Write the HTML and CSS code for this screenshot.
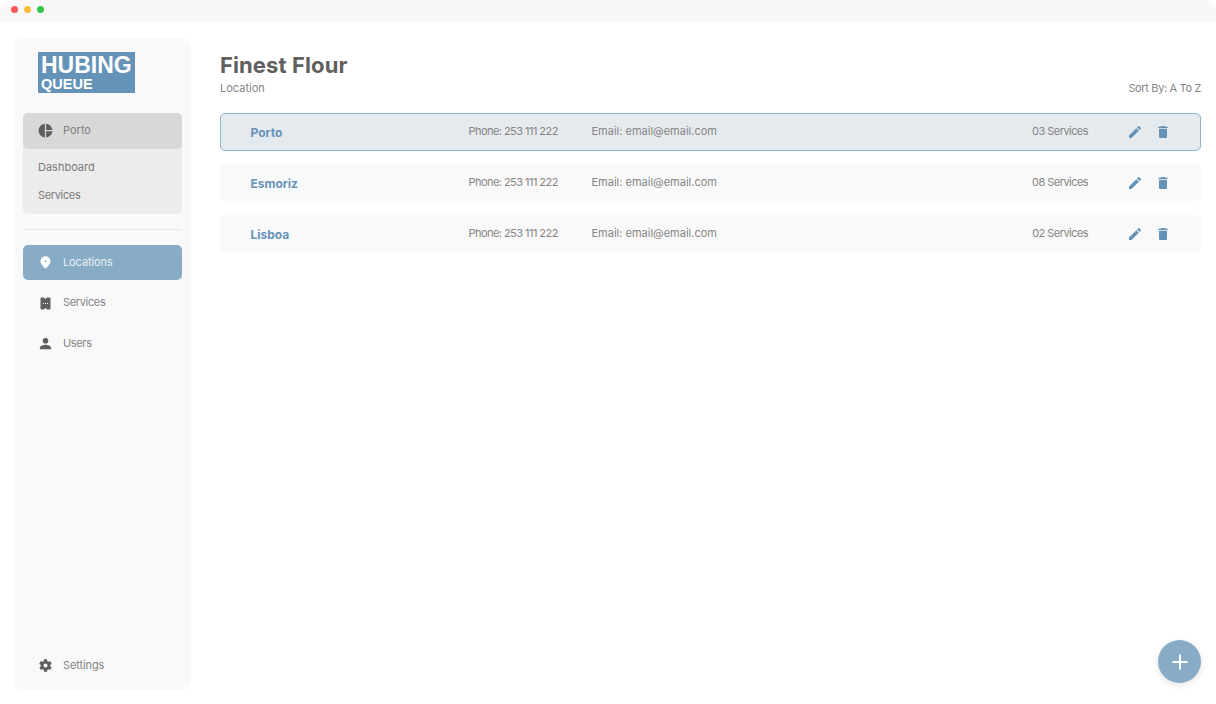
FILE: index.html
```html
<!DOCTYPE html>
<html lang="en">
  <head>
    <meta charset="UTF-8" />
    <meta name="viewport" content="width=device-width, initial-scale=1.0" />
    <title>Hubing Queue - Locations</title>
    <link rel="stylesheet" href="styles.css">
  </head>
  <body>
    <div class="titlebar">
      <span class="dot red"></span>
      <span class="dot yellow"></span>
      <span class="dot green"></span>
    </div>

    <div class="app">
      <aside class="sidebar">
        <div class="logo">
          <div class="logo-top">HUBING</div>
          <div class="logo-bottom">QUEUE</div>
        </div>

        <div class="group">
          <div class="group-head">
            <svg class="icon" viewBox="0 0 24 24"><path d="M11 1v22C5.200 22.500 1 17.700 1 12S5.200 1.500 11 1zm2 0v10h10c-.5-5.300-4.700-9.500-10-10zm0 12v10c5.300-.5 9.500-4.700 10-10H13z"/></svg>
            <span>Porto</span>
          </div>
          <a class="group-link">Dashboard</a>
          <a class="group-link short">Services</a>
        </div>

        <div class="divider"></div>

        <nav class="nav">
          <a class="nav-item active">
            <svg class="icon" viewBox="0 0 24 24"><path fill-rule="evenodd" d="M12 2a8 8 0 0 0-8 8c0 5.400 8 12 8 12s8-6.600 8-12a8 8 0 0 0-8-8zm0 6.500a1.500 1.500 0 1 1 0 3 1.500 1.500 0 0 1 0-3z"/></svg>
            <span>Locations</span>
          </a>
          <a class="nav-item">
            <svg class="icon" viewBox="0 0 24 24"><path fill-rule="evenodd" d="M5.500 2.500H10a2 2 0 0 0 4 0h4.500a1.500 1.500 0 0 1 1.500 1.500v16a1.500 1.500 0 0 1-1.500 1.500H14a2 2 0 0 0-4 0H5.500A1.500 1.500 0 0 1 4 20V4a1.500 1.500 0 0 1 1.500-1.500zM8 11.200v1.600h1.600v-1.600H8zm3.200 0v1.600h1.600v-1.600h-1.600zm3.200 0v1.600H16v-1.600h-1.600z"/></svg>
            <span class="short">Services</span>
          </a>
          <a class="nav-item">
            <svg class="icon" viewBox="0 0 24 24"><path d="M12 12a4.500 4.500 0 1 0 0-9 4.500 4.500 0 0 0 0 9zm0 2c-3.300 0-9 1.700-9 4.500V21h18v-2.500c0-2.800-5.700-4.500-9-4.500z"/></svg>
            <span class="short">Users</span>
          </a>
        </nav>

        <a class="nav-item settings">
          <svg class="icon" viewBox="0 0 24 24"><path fill-rule="evenodd" d="M19.400 13c.1-.3.1-.7.1-1s0-.7-.1-1l2.100-1.600c.2-.2.2-.4.100-.6l-2-3.500c-.1-.2-.4-.3-.6-.2l-2.500 1c-.5-.4-1.100-.7-1.700-1l-.4-2.600c0-.3-.2-.5-.5-.5h-4c-.3 0-.5.2-.5.400l-.4 2.700c-.6.2-1.200.6-1.700 1l-2.500-1c-.2-.1-.5 0-.6.200l-2 3.500c-.1.200-.1.400.1.600L4.600 11c-.1.300-.1.700-.1 1s0 .7.100 1l-2.100 1.600c-.2.200-.2.400-.1.600l2 3.500c.1.200.4.300.6.200l2.500-1c.5.400 1.100.7 1.700 1l.4 2.600c0 .3.200.5.500.5h4c.3 0 .5-.2.500-.4l.4-2.700c.6-.2 1.200-.6 1.700-1l2.500 1c.2.100.5 0 .6-.2l2-3.500c.1-.2.100-.4-.1-.6L19.400 13zM12 15.200a3.200 3.200 0 1 1 0-6.400 3.200 3.200 0 0 1 0 6.400z"/></svg>
          <span>Settings</span>
        </a>
      </aside>

      <main class="content">
        <h1 class="title">Finest Flour</h1>
        <div class="subhead">
          <span>Location</span>
          <span class="sort">Sort By: A To Z</span>
        </div>

        <div class="row selected">
          <span class="row-name">Porto</span>
          <span class="row-phone">Phone: 253 111 222</span>
          <span>Email: email@email.com</span>
          <span class="row-count">03 Services</span>
          <svg class="row-icon" viewBox="0 0 24 24"><path d="M3 17.250V21h3.750L17.800 9.940l-3.750-3.750L3 17.250zM20.700 7.040a1 1 0 0 0 0-1.410l-2.340-2.340a1 1 0 0 0-1.410 0l-1.830 1.830 3.750 3.750 1.830-1.830z"/></svg>
          <svg class="row-icon" viewBox="0 0 24 24"><path d="M6 19c0 1.100.9 2 2 2h8c1.100 0 2-.9 2-2V7H6v12zM19 4h-3.500l-1-1h-5l-1 1H5v2h14V4z"/></svg>
        </div>
        <div class="row">
          <span class="row-name">Esmoriz</span>
          <span class="row-phone">Phone: 253 111 222</span>
          <span>Email: email@email.com</span>
          <span class="row-count">08 Services</span>
          <svg class="row-icon" viewBox="0 0 24 24"><path d="M3 17.250V21h3.750L17.800 9.940l-3.750-3.750L3 17.250zM20.700 7.040a1 1 0 0 0 0-1.410l-2.340-2.340a1 1 0 0 0-1.410 0l-1.830 1.830 3.750 3.750 1.830-1.830z"/></svg>
          <svg class="row-icon" viewBox="0 0 24 24"><path d="M6 19c0 1.100.9 2 2 2h8c1.100 0 2-.9 2-2V7H6v12zM19 4h-3.500l-1-1h-5l-1 1H5v2h14V4z"/></svg>
        </div>
        <div class="row">
          <span class="row-name">Lisboa</span>
          <span class="row-phone">Phone: 253 111 222</span>
          <span>Email: email@email.com</span>
          <span class="row-count">02 Services</span>
          <svg class="row-icon" viewBox="0 0 24 24"><path d="M3 17.250V21h3.750L17.800 9.940l-3.750-3.750L3 17.250zM20.700 7.040a1 1 0 0 0 0-1.410l-2.340-2.340a1 1 0 0 0-1.410 0l-1.830 1.830 3.750 3.750 1.830-1.830z"/></svg>
          <svg class="row-icon" viewBox="0 0 24 24"><path d="M6 19c0 1.100.9 2 2 2h8c1.100 0 2-.9 2-2V7H6v12zM19 4h-3.500l-1-1h-5l-1 1H5v2h14V4z"/></svg>
        </div>
      </main>
    </div>

    <button class="fab">
      <svg viewBox="0 0 24 24"><path d="M10.800 3h2.400v7.800H21v2.400h-7.800V21h-2.400v-7.800H3v-2.400h7.800z"/></svg>
    </button>
  </body>
</html>
```

FILE: styles.css
```css
* {
  box-sizing: border-box;
}
html,
body {
  margin: 0;
  height: 100%;
}
body {
  position: relative;
  overflow: hidden;
  background: #fff;
  color: #808080;
  font-family: Inter, "Noto Sans", sans-serif;
  font-size: 11px;
}

/* ----------- window bar ----------- */
.titlebar {
  display: flex;
  align-items: center;
  gap: 6px;
  height: 22px;
  padding: 0 0 3px 11px;
  background: #f8f8f8;
  border-radius: 10px 10px 0 0;
}
.dot {
  width: 7px;
  height: 7px;
  border-radius: 50%;
}
.red {
  background: #fc5753;
}
.yellow {
  background: #fdbc40;
}
.green {
  background: #33c748;
}

.app {
  display: flex;
  height: 682px;
  padding: 16px 15px 14px 14px;
  gap: 29.500px;
}

/* ----------- sidebar ----------- */
.sidebar {
  display: flex;
  flex-direction: column;
  flex: 0 0 176.500px;
  padding: 14px 8.500px 7px 9px;
  background: #f9f9f9;
  border-radius: 10px;
}
.logo {
  width: 97px;
  height: 41px;
  margin: 0 0 20px 15px;
  padding: 0 0 0 3px;
  background: #6593b8;
  color: #fff;
  font-family: "Liberation Sans", sans-serif;
  font-weight: 700;
}
.logo-top {
  height: 26px;
  font-size: 23px;
  line-height: 26px;
}
.logo-bottom {
  height: 15px;
  font-size: 14.500px;
  line-height: 13px;
}
.icon {
  flex: none;
  width: 15px;
  height: 15px;
  fill: #5f5f5f;
}
.group {
  display: flex;
  flex-direction: column;
  height: 101px;
  background: #ececec;
  border-radius: 5px;
}
.group-head {
  display: flex;
  align-items: center;
  gap: 10px;
  height: 36px;
  padding: 0 0 1px 15px;
  margin-bottom: 4px;
  background: #d8d8d8;
  border-radius: 5px;
}
.group-head span {
  margin-bottom: 1px;
}
.group-link {
  height: 28px;
  padding-left: 15px;
  line-height: 28px;
  color: #7b7b7b;
}
.short {
  letter-spacing: -0.35px;
}
.divider {
  height: 1px;
  margin: 15px 0 15px;
  background: #e6e6e6;
}
.nav {
  display: flex;
  flex-direction: column;
  gap: 5.500px;
}
.nav-item {
  display: flex;
  align-items: center;
  gap: 10px;
  height: 35px;
  padding-left: 15px;
  border-radius: 5px;
  letter-spacing: -0.1px;
  color: #858585;
}
.nav-item span {
  margin-bottom: 2px;
}
.nav-item.active {
  background: #89acc6;
  color: #e8eff5;
}
.nav-item.active .icon {
  fill: #fff;
}
.settings {
  margin-top: auto;
}

/* ----------- main list ----------- */
.content {
  flex: 1;
}
.title {
  margin: 13px 0 0;
  font-size: 22px;
  line-height: 28px;
  font-weight: 700;
  letter-spacing: 0.1px;
  color: #5f5f5f;
}
.subhead {
  display: flex;
  justify-content: space-between;
  margin: 2px 0 17px;
  line-height: 15px;
  color: #858585;
}
.sort {
  letter-spacing: -0.35px;
}
.row {
  display: grid;
  grid-template-columns: 218px 123px 1fr auto 55px 28px;
  align-items: center;
  height: 37px;
  margin-bottom: 14px;
  padding: 0 30px 2px 30.500px;
  background: #f9f9f9;
  border-radius: 5px;
  color: #858585;
}
.row.selected {
  height: 38px;
  margin-bottom: 13px;
  padding: 0 29px 2px 29.500px;
  background: #e5eaef;
  border: 1px solid #8fb2cd;
}
.row-name {
  margin-top: 3px;
  font-size: 12px;
  font-weight: 700;
  color: #6593b8;
}
.row-phone {
  letter-spacing: -0.55px;
}
.row-count {
  text-align: right;
  letter-spacing: -0.55px;
}
.row-icon {
  justify-self: end;
  width: 16px;
  height: 16px;
  margin-top: 2px;
  fill: #6593b8;
}

/* sits over the page corner */
.fab {
  position: absolute;
  left: 1158px;
  top: 640px;
  display: flex;
  align-items: center;
  justify-content: center;
  width: 43px;
  height: 43px;
  padding: 0;
  border: 0;
  border-radius: 50%;
  background: #89acc6;
  box-shadow: 0 2px 6px rgba(0, 0, 0, 0.12);
}
.fab svg {
  width: 20px;
  height: 20px;
  fill: #fff;
}
```
